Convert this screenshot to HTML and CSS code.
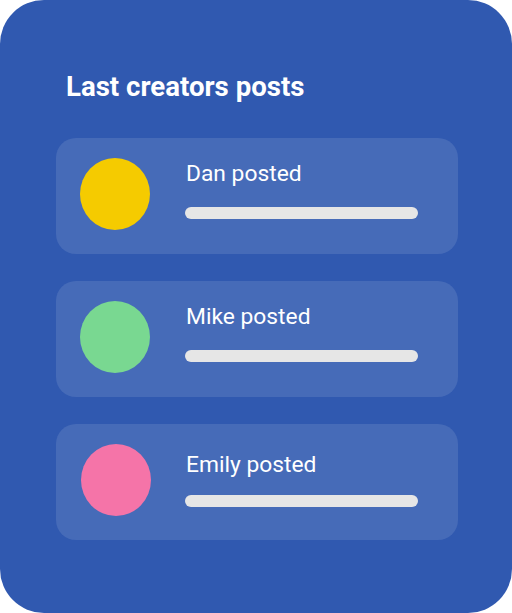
FILE: index.html
```html
<!DOCTYPE html>
<html lang="en">
<head>
<meta charset="utf-8">
<title>Last creators posts</title>
<link rel="stylesheet" href="styles.css">
</head>
<body>
<main class="panel">
  <h1 class="panel-title">Last creators posts</h1>
  <ul class="post-list">
    <li class="post">
      <span class="avatar avatar-yellow"></span>
      <div class="post-body">
        <p class="post-name">Dan posted</p>
        <span class="post-bar"></span>
      </div>
    </li>
    <li class="post">
      <span class="avatar avatar-green"></span>
      <div class="post-body">
        <p class="post-name">Mike posted</p>
        <span class="post-bar"></span>
      </div>
    </li>
    <li class="post post-low">
      <span class="avatar avatar-pink"></span>
      <div class="post-body">
        <p class="post-name">Emily posted</p>
        <span class="post-bar"></span>
      </div>
    </li>
  </ul>
</main>
</body>
</html>
```
FILE: styles.css
```css
* { box-sizing: border-box; }
html, body { margin: 0; padding: 0; background: #ffffff; }
body { width: 512px; height: 613px; font-family: Roboto, "Liberation Sans", sans-serif; }

.panel {
  width: 512px;
  height: 613px;
  background: rgb(48, 89, 176);
  border-radius: 44px;
  padding: 71px 54px 0 56px;
  display: flex;
  flex-direction: column;
}

.panel-title {
  margin: 0 0 0 10px;
  font-size: 27.6px;
  line-height: 32px;
  font-weight: 700;
  color: #ffffff;
}

.post-list {
  list-style: none;
  margin: 35px 0 0 0;
  padding: 0;
  display: flex;
  flex-direction: column;
  gap: 27px;
}

.post {
  height: 116px;
  border-radius: 20px;
  background: rgb(70, 107, 184);
  padding: 20px 24px 0 24px;
  display: flex;
  align-items: flex-start;
  gap: 36px;
}

.avatar {
  flex: none;
  width: 70px;
  height: 72px;
  border-radius: 50%;
}
.avatar-yellow { background: #f5cb00; }
.avatar-green { background: #79d891; }
.avatar-pink { background: #f574a8; }

.post-body {
  padding-top: 3px;
  display: flex;
  flex-direction: column;
}

.post-name {
  margin: 0;
  font-size: 22.8px;
  line-height: 26px;
  color: #ffffff;
}

.post-bar {
  display: block;
  margin-top: 20px;
  margin-left: -1px;
  width: 233px;
  height: 12px;
  border-radius: 6px;
  background: #e6e6e6;
}

.post-low { gap: 35px; }
.post-low .post-body { padding-top: 8px; }
.post-low .post-bar { margin-top: 17px; }
.post-low .avatar { margin-left: 1px; }
```
